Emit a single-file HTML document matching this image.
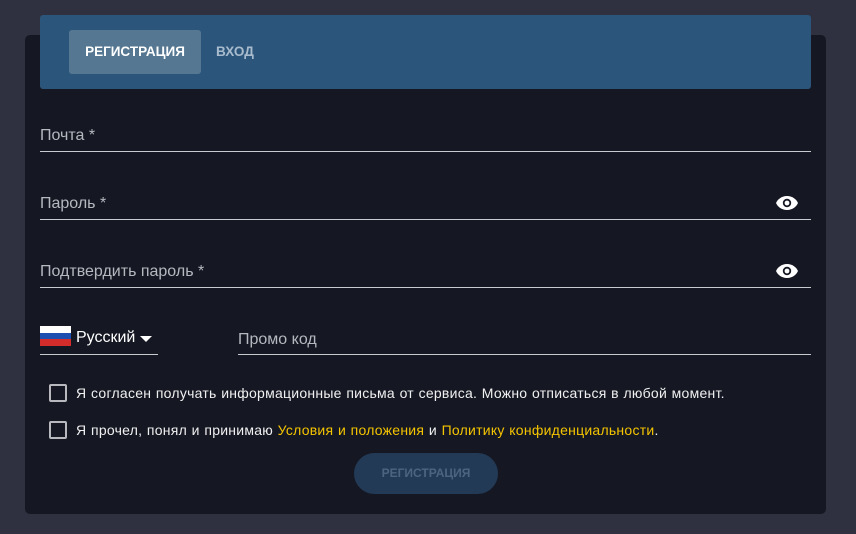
<!DOCTYPE html>
<html><head><meta charset="utf-8"><style>
*{box-sizing:border-box;margin:0;padding:0}
body{width:856px;height:534px;background:#2f3040;font-family:"Liberation Sans","Noto Sans CJK SC",sans-serif;position:relative;overflow:hidden}
.card{position:absolute;left:25px;top:35px;width:801px;height:479px;background:#151823;border-radius:5px}
.head{position:absolute;left:40px;top:15px;width:771px;height:74px;background:#2c557b;border-radius:3px}
.tab{position:absolute;top:15px;height:44px;line-height:44px;font-size:13.5px;font-weight:bold;color:#a9bccd}
.t1{left:29px;width:132px;background:#557792;border-radius:3px;text-align:center;color:#fff}
.t2{left:176px}
.field{position:absolute;border-bottom:1px solid #c9cbd1;color:#b6b8bf;font-size:16px;padding-top:3px}
.eye{position:absolute;right:12px}
.cb{position:absolute;left:49px;width:18px;height:18px;border:2px solid #b8b9be;border-radius:2px}
.lbl{position:absolute;left:76px;color:#f0f0f0;font-size:14px;letter-spacing:0.25px;word-spacing:0.5px}
.y{color:#f5c400}
.btn{position:absolute;left:354px;top:453px;width:144px;height:41px;border-radius:21px;background:#233a56;color:#4d6480;font-size:12px;font-weight:bold;text-align:center;line-height:41px}
</style></head><body>
<div class="card"></div>
<div class="head"><div class="tab t1">РЕГИСТРАЦИЯ</div><div class="tab t2">ВХОД</div></div>
<div class="field" style="left:40px;top:124px;width:771px;height:28px">Почта *</div>
<div class="field" style="left:40px;top:192px;width:771px;height:28px">Пароль *
<svg class="eye" style="top:3px" width="24" height="16" viewBox="0 0 24 16"><path d="M12 1C6.5 1 2.5 4.5 1 8c1.5 3.5 5.5 7 11 7s9.5-3.5 11-7C21.5 4.5 17.5 1 12 1z" fill="#fff"/><circle cx="12" cy="8" r="4.2" fill="#151823"/><circle cx="12" cy="8" r="2.4" fill="#fff"/></svg></div>
<div class="field" style="left:40px;top:260px;width:771px;height:28px">Подтвердить пароль *
<svg class="eye" style="top:3px" width="24" height="16" viewBox="0 0 24 16"><path d="M12 1C6.5 1 2.5 4.5 1 8c1.5 3.5 5.5 7 11 7s9.5-3.5 11-7C21.5 4.5 17.5 1 12 1z" fill="#fff"/><circle cx="12" cy="8" r="4.2" fill="#151823"/><circle cx="12" cy="8" r="2.4" fill="#fff"/></svg></div>
<div class="field" style="left:40px;top:324px;width:118px;height:31px;color:#fff;padding:0">
<svg style="position:absolute;left:0;top:2px" width="31" height="20"><rect width="31" height="7" fill="#fff"/><rect y="7" width="31" height="6" fill="#1c4fb0"/><rect y="13" width="31" height="7" fill="#d42b2b"/></svg>
<span style="position:absolute;left:36px;top:5px">Русский</span>
<svg style="position:absolute;left:100px;top:12px" width="12" height="6"><path d="M0 0h12L6 6z" fill="#fff"/></svg></div>
<div class="field" style="left:238px;top:329px;width:573px;height:26px;padding-top:2px">Промо код</div>
<div class="cb" style="top:384px"></div><div class="lbl" style="top:385px">Я согласен получать информационные письма от сервиса. Можно отписаться в любой момент.</div>
<div class="cb" style="top:421px"></div><div class="lbl" style="top:422px">Я прочел, понял и принимаю <span class="y">Условия и положения</span> и <span class="y">Политику конфиденциальности</span>.</div>
<div class="btn">РЕГИСТРАЦИЯ</div>
</body></html>
